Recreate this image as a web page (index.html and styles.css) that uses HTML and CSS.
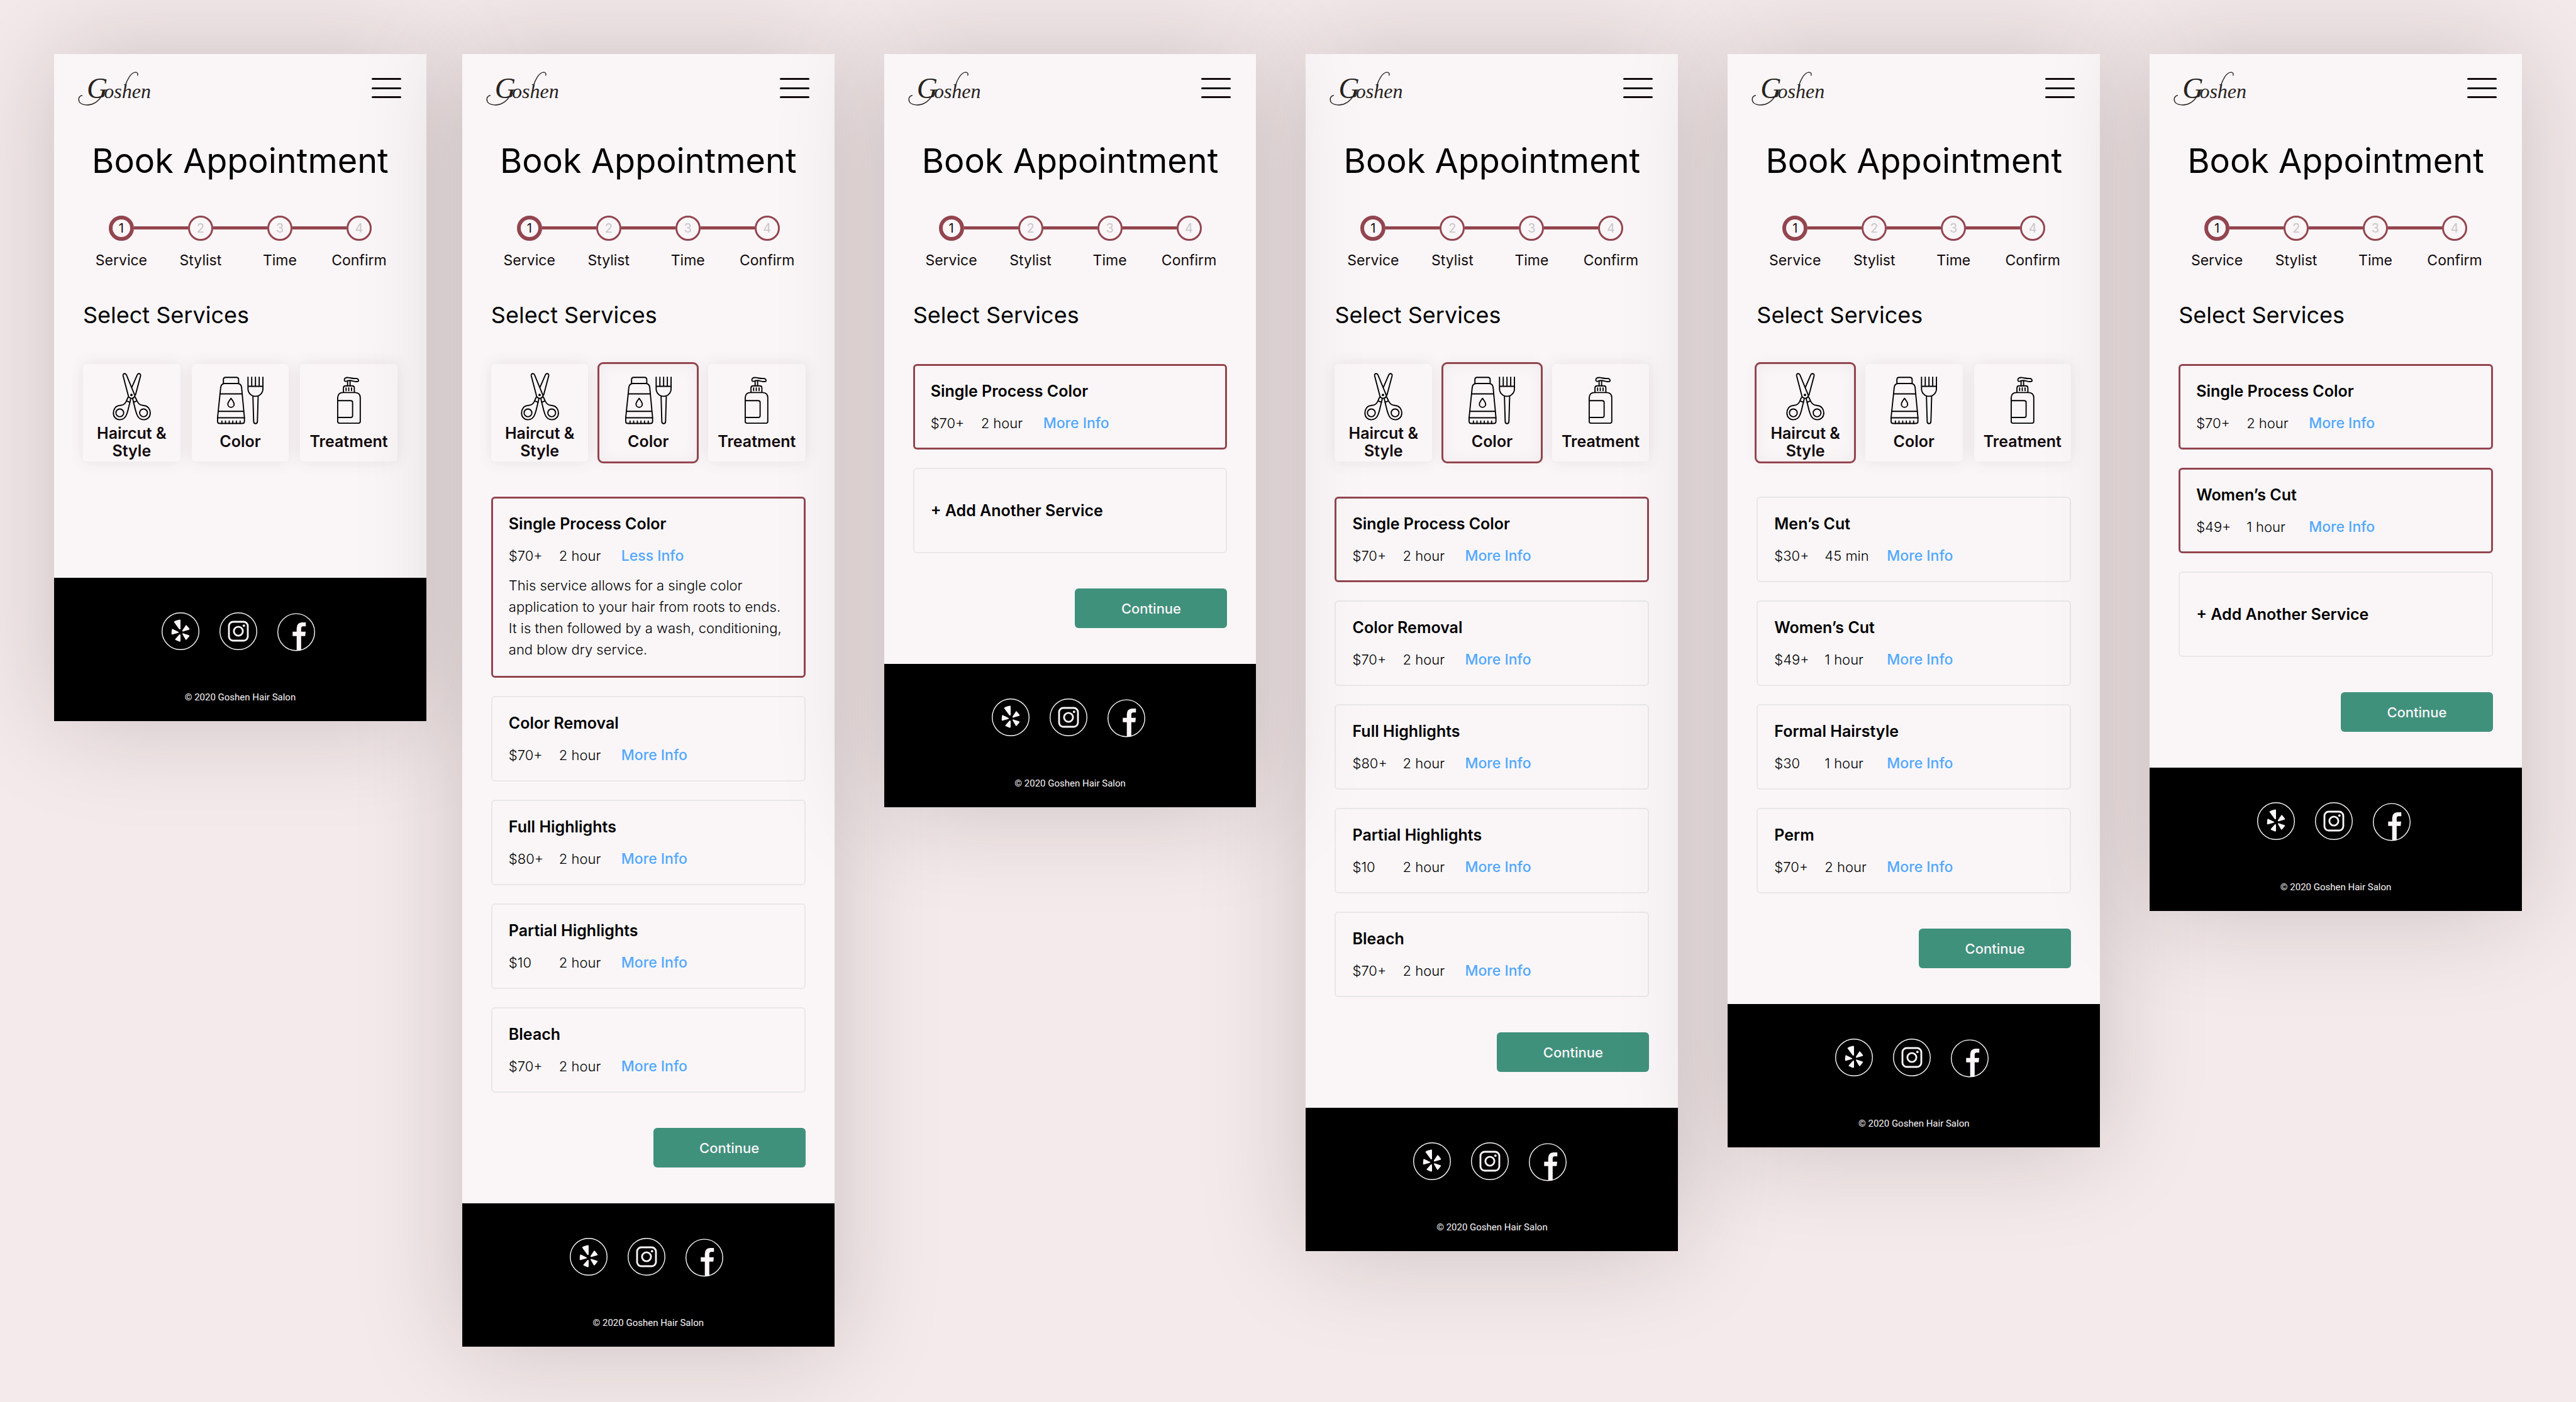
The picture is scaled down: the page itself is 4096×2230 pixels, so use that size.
FILE: index.html
```html
<!DOCTYPE html>
<html lang="en">
<head>
<meta charset="utf-8">
<meta name="viewport" content="width=device-width, initial-scale=1">
<title>Goshen Hair Salon – Book Appointment</title>
<link rel="stylesheet" href="styles.css">
</head>
<body>
<svg class="sprite" aria-hidden="true">
  <symbol id="swash" viewBox="70 55 480 240">
    <path fill="none" stroke="currentColor" stroke-width="6" stroke-linecap="round" d="M238 196C222 252 176 284 124 282C96 281 76 268 75 246C75 232 84 221 97 218"/>
    <path fill="none" stroke="currentColor" stroke-width="6" stroke-linecap="round" d="M386 156C398 112 424 66 454 63C468 63 473 72 469 84"/>
  </symbol>
  <symbol id="scissors" viewBox="148 86 256 320">
    <g fill="none" stroke="currentColor" stroke-width="8" stroke-linejoin="round">
      <path d="M276 184L313 99Q317 91 325 91Q337 92 335 106L300 238"/>
      <path d="M253 240L218 106Q216 92 228 91Q237 91 240 99L297 238Q291 257 275 257Q258 256 253 240Z"/>
      <path d="M253 246L240 274L264 283L269 258M298 246L311 274L288 283L282 258"/>
      <path d="M240 276C228 300 215 303 195 305C168 307 153 330 153 355C153 382 172 400 196 400C222 400 236 382 243 362C254 330 256 310 264 283"/>
      <path d="M312 276C324 300 337 303 357 305C384 307 400 330 400 355C400 382 380 400 356 400C330 400 316 382 309 362C298 330 295 310 288 283"/>
      <circle cx="196" cy="354" r="26"/><circle cx="355" cy="354" r="26"/>
    </g>
    <circle cx="274" cy="234" r="8" fill="currentColor"/>
  </symbol>
  <symbol id="dye" viewBox="96 110 312 320">
    <g fill="none" stroke="currentColor" stroke-width="8" stroke-linejoin="round" stroke-linecap="round">
      <path d="M139 156V130Q139 115 154 115H226Q241 115 241 130V156"/>
      <path d="M146 156H236Q258 158 261 182L280 385V410Q280 424 266 424H114Q100 424 100 410V385L121 182Q124 158 146 156Z"/>
      <path d="M118 226H264M107 343H274M101 386H280"/>
      <path d="M129 408V424M153 408V424M178 408V424M202 408V424M226 408V424M251 408V424"/>
      <path d="M190 255C182 268 169 280 169 295A21 21 0 0 0 211 295C211 280 198 268 190 255Z"/>
      <path d="M304 114V192A50 50 0 0 0 404 192V114M304 175H404M329 114V175M354 114V175M379 114V175"/>
      <path d="M337 243L342 412Q343 425 354 425Q366 425 367 412L372 243"/>
    </g>
  </symbol>
  <symbol id="bottle" viewBox="178 110 162 320">
    <g fill="none" stroke="currentColor" stroke-width="8" stroke-linejoin="round" stroke-linecap="round">
      <path d="M227 131C226 118 240 113 256 115C275 118 285 122 308 121C320 121 324 130 323 138C318 144 300 142 285 138C268 133 255 133 243 139C235 143 227 138 227 131Z"/>
      <path d="M249 138V170M266 138V170M239 185V203M257 185V203M276 185V203"/>
      <path d="M221 214V186Q221 171 236 171H281Q295 171 295 186V214"/>
      <path d="M182 412V250Q184 216 218 216H300Q335 218 335 250V412Q335 424 323 424H195Q182 424 182 412Z"/>
      <path d="M182 271H270Q283 271 283 283V373Q283 385 270 385H182"/>
    </g>
  </symbol>
  <symbol id="yelp" viewBox="180 126 252 252">
    <circle cx="306" cy="252" r="123" fill="none" stroke="currentColor" stroke-width="6"/>
    <path fill="currentColor" d="M262 190Q262 183 300 174Q306 173 306 180V235Q304 242 298 239ZM343 210Q346 210 366 236Q367 241 362 243L322 254Q316 252 319 246ZM250 237Q247 240 246 270Q247 275 252 274L292 263Q297 260 292 256L254 237ZM302 273Q306 273 306 278V318Q304 322 298 321L271 310Q269 306 272 303L298 274ZM322 266L364 279Q367 282 364 287L347 308Q342 311 339 307L319 272Q318 267 322 266Z"/>
  </symbol>
  <symbol id="instagram" viewBox="564 126 252 252">
    <g fill="none" stroke="currentColor">
      <circle cx="690" cy="252" r="123" stroke-width="6"/>
      <rect x="627" y="189" width="126" height="126" rx="28" stroke-width="12"/>
      <circle cx="690" cy="252" r="30" stroke-width="12"/>
    </g>
    <circle cx="727" cy="215" r="8" fill="currentColor"/>
  </symbol>
  <symbol id="facebook" viewBox="948 126 252 252" overflow="visible">
    <circle cx="1074" cy="258" r="123" fill="none" stroke="currentColor" stroke-width="6"/>
    <path fill="currentColor" d="M1077 382V285H1050V255H1077V232Q1078 194 1112 193H1138V219H1120Q1107 220 1107 234V255H1137L1134 285H1107V379Z"/>
  </symbol>
</svg>

<main class="board">

  <section class="phone">
    <header class="topbar">
      <a class="logo" href="#"><span class="logo-initial">G</span>oshen<svg class="logo-swash" aria-hidden="true"><use href="#swash"/></svg></a>
      <button class="menu" type="button" aria-label="Menu"><span></span><span></span><span></span></button>
    </header>
    <h1 class="title">Book Appointment</h1>
    <ol class="steps">
      <li class="step step-current"><span class="dot">1</span>Service</li>
      <li class="step"><span class="dot">2</span>Stylist</li>
      <li class="step"><span class="dot">3</span>Time</li>
      <li class="step"><span class="dot">4</span>Confirm</li>
    </ol>
    <div class="content">
      <h2 class="subtitle">Select Services</h2>
      <div class="categories categories-only">
        <button class="category category-tall" type="button"><svg class="icon-scissors"><use href="#scissors"/></svg>Haircut &amp; Style</button>
        <button class="category" type="button"><svg class="icon-dye"><use href="#dye"/></svg>Color</button>
        <button class="category" type="button"><svg class="icon-bottle"><use href="#bottle"/></svg>Treatment</button>
      </div>
    </div>
    <footer class="footer">
      <nav class="social">
        <a href="#" aria-label="Yelp"><svg><use href="#yelp"/></svg></a>
        <a href="#" aria-label="Instagram"><svg><use href="#instagram"/></svg></a>
        <a href="#" aria-label="Facebook"><svg><use href="#facebook"/></svg></a>
      </nav>
      <p class="copyright">© 2020 Goshen Hair Salon</p>
    </footer>
  </section>

  <section class="phone">
    <header class="topbar">
      <a class="logo" href="#"><span class="logo-initial">G</span>oshen<svg class="logo-swash" aria-hidden="true"><use href="#swash"/></svg></a>
      <button class="menu" type="button" aria-label="Menu"><span></span><span></span><span></span></button>
    </header>
    <h1 class="title">Book Appointment</h1>
    <ol class="steps">
      <li class="step step-current"><span class="dot">1</span>Service</li>
      <li class="step"><span class="dot">2</span>Stylist</li>
      <li class="step"><span class="dot">3</span>Time</li>
      <li class="step"><span class="dot">4</span>Confirm</li>
    </ol>
    <div class="content">
      <h2 class="subtitle">Select Services</h2>
      <div class="categories">
        <button class="category category-tall" type="button"><svg class="icon-scissors"><use href="#scissors"/></svg>Haircut &amp; Style</button>
        <button class="category selected" type="button"><svg class="icon-dye"><use href="#dye"/></svg>Color</button>
        <button class="category" type="button"><svg class="icon-bottle"><use href="#bottle"/></svg>Treatment</button>
      </div>
      <ul class="services">
        <li class="service chosen">
          <h3>Single Process Color</h3>
          <p class="meta"><span>$70+</span><span>2 hour</span><button type="button">Less Info</button></p>
          <p class="details">This service allows for a single color<br>application to your hair from roots to ends.<br>It is then followed by a wash, conditioning,<br>and blow dry service.</p>
        </li>
        <li class="service"><h3>Color Removal</h3><p class="meta"><span>$70+</span><span>2 hour</span><button type="button">More Info</button></p></li>
        <li class="service"><h3>Full Highlights</h3><p class="meta"><span>$80+</span><span>2 hour</span><button type="button">More Info</button></p></li>
        <li class="service"><h3>Partial Highlights</h3><p class="meta"><span>$10</span><span>2 hour</span><button type="button">More Info</button></p></li>
        <li class="service"><h3>Bleach</h3><p class="meta"><span>$70+</span><span>2 hour</span><button type="button">More Info</button></p></li>
      </ul>
      <button class="continue" type="button">Continue</button>
    </div>
    <footer class="footer">
      <nav class="social">
        <a href="#" aria-label="Yelp"><svg><use href="#yelp"/></svg></a>
        <a href="#" aria-label="Instagram"><svg><use href="#instagram"/></svg></a>
        <a href="#" aria-label="Facebook"><svg><use href="#facebook"/></svg></a>
      </nav>
      <p class="copyright">© 2020 Goshen Hair Salon</p>
    </footer>
  </section>

  <section class="phone phone-front">
    <header class="topbar">
      <a class="logo" href="#"><span class="logo-initial">G</span>oshen<svg class="logo-swash" aria-hidden="true"><use href="#swash"/></svg></a>
      <button class="menu" type="button" aria-label="Menu"><span></span><span></span><span></span></button>
    </header>
    <h1 class="title">Book Appointment</h1>
    <ol class="steps">
      <li class="step step-current"><span class="dot">1</span>Service</li>
      <li class="step"><span class="dot">2</span>Stylist</li>
      <li class="step"><span class="dot">3</span>Time</li>
      <li class="step"><span class="dot">4</span>Confirm</li>
    </ol>
    <div class="content">
      <h2 class="subtitle">Select Services</h2>
      <ul class="services">
        <li class="service chosen"><h3>Single Process Color</h3><p class="meta"><span>$70+</span><span>2 hour</span><button type="button">More Info</button></p></li>
        <li><button class="add-service" type="button">+ Add Another Service</button></li>
      </ul>
      <button class="continue" type="button">Continue</button>
    </div>
    <footer class="footer">
      <nav class="social">
        <a href="#" aria-label="Yelp"><svg><use href="#yelp"/></svg></a>
        <a href="#" aria-label="Instagram"><svg><use href="#instagram"/></svg></a>
        <a href="#" aria-label="Facebook"><svg><use href="#facebook"/></svg></a>
      </nav>
      <p class="copyright">© 2020 Goshen Hair Salon</p>
    </footer>
  </section>

  <section class="phone">
    <header class="topbar">
      <a class="logo" href="#"><span class="logo-initial">G</span>oshen<svg class="logo-swash" aria-hidden="true"><use href="#swash"/></svg></a>
      <button class="menu" type="button" aria-label="Menu"><span></span><span></span><span></span></button>
    </header>
    <h1 class="title">Book Appointment</h1>
    <ol class="steps">
      <li class="step step-current"><span class="dot">1</span>Service</li>
      <li class="step"><span class="dot">2</span>Stylist</li>
      <li class="step"><span class="dot">3</span>Time</li>
      <li class="step"><span class="dot">4</span>Confirm</li>
    </ol>
    <div class="content">
      <h2 class="subtitle">Select Services</h2>
      <div class="categories">
        <button class="category category-tall" type="button"><svg class="icon-scissors"><use href="#scissors"/></svg>Haircut &amp; Style</button>
        <button class="category selected" type="button"><svg class="icon-dye"><use href="#dye"/></svg>Color</button>
        <button class="category" type="button"><svg class="icon-bottle"><use href="#bottle"/></svg>Treatment</button>
      </div>
      <ul class="services">
        <li class="service chosen"><h3>Single Process Color</h3><p class="meta"><span>$70+</span><span>2 hour</span><button type="button">More Info</button></p></li>
        <li class="service"><h3>Color Removal</h3><p class="meta"><span>$70+</span><span>2 hour</span><button type="button">More Info</button></p></li>
        <li class="service"><h3>Full Highlights</h3><p class="meta"><span>$80+</span><span>2 hour</span><button type="button">More Info</button></p></li>
        <li class="service"><h3>Partial Highlights</h3><p class="meta"><span>$10</span><span>2 hour</span><button type="button">More Info</button></p></li>
        <li class="service"><h3>Bleach</h3><p class="meta"><span>$70+</span><span>2 hour</span><button type="button">More Info</button></p></li>
      </ul>
      <button class="continue" type="button">Continue</button>
    </div>
    <footer class="footer">
      <nav class="social">
        <a href="#" aria-label="Yelp"><svg><use href="#yelp"/></svg></a>
        <a href="#" aria-label="Instagram"><svg><use href="#instagram"/></svg></a>
        <a href="#" aria-label="Facebook"><svg><use href="#facebook"/></svg></a>
      </nav>
      <p class="copyright">© 2020 Goshen Hair Salon</p>
    </footer>
  </section>

  <section class="phone">
    <header class="topbar">
      <a class="logo" href="#"><span class="logo-initial">G</span>oshen<svg class="logo-swash" aria-hidden="true"><use href="#swash"/></svg></a>
      <button class="menu" type="button" aria-label="Menu"><span></span><span></span><span></span></button>
    </header>
    <h1 class="title">Book Appointment</h1>
    <ol class="steps">
      <li class="step step-current"><span class="dot">1</span>Service</li>
      <li class="step"><span class="dot">2</span>Stylist</li>
      <li class="step"><span class="dot">3</span>Time</li>
      <li class="step"><span class="dot">4</span>Confirm</li>
    </ol>
    <div class="content">
      <h2 class="subtitle">Select Services</h2>
      <div class="categories">
        <button class="category category-tall selected" type="button"><svg class="icon-scissors"><use href="#scissors"/></svg>Haircut &amp; Style</button>
        <button class="category" type="button"><svg class="icon-dye"><use href="#dye"/></svg>Color</button>
        <button class="category" type="button"><svg class="icon-bottle"><use href="#bottle"/></svg>Treatment</button>
      </div>
      <ul class="services">
        <li class="service"><h3>Men’s Cut</h3><p class="meta"><span>$30+</span><span>45 min</span><button type="button">More Info</button></p></li>
        <li class="service"><h3>Women’s Cut</h3><p class="meta"><span>$49+</span><span>1 hour</span><button type="button">More Info</button></p></li>
        <li class="service"><h3>Formal Hairstyle</h3><p class="meta"><span>$30</span><span>1 hour</span><button type="button">More Info</button></p></li>
        <li class="service"><h3>Perm</h3><p class="meta"><span>$70+</span><span>2 hour</span><button type="button">More Info</button></p></li>
      </ul>
      <button class="continue" type="button">Continue</button>
    </div>
    <footer class="footer">
      <nav class="social">
        <a href="#" aria-label="Yelp"><svg><use href="#yelp"/></svg></a>
        <a href="#" aria-label="Instagram"><svg><use href="#instagram"/></svg></a>
        <a href="#" aria-label="Facebook"><svg><use href="#facebook"/></svg></a>
      </nav>
      <p class="copyright">© 2020 Goshen Hair Salon</p>
    </footer>
  </section>

  <section class="phone">
    <header class="topbar">
      <a class="logo" href="#"><span class="logo-initial">G</span>oshen<svg class="logo-swash" aria-hidden="true"><use href="#swash"/></svg></a>
      <button class="menu" type="button" aria-label="Menu"><span></span><span></span><span></span></button>
    </header>
    <h1 class="title">Book Appointment</h1>
    <ol class="steps">
      <li class="step step-current"><span class="dot">1</span>Service</li>
      <li class="step"><span class="dot">2</span>Stylist</li>
      <li class="step"><span class="dot">3</span>Time</li>
      <li class="step"><span class="dot">4</span>Confirm</li>
    </ol>
    <div class="content">
      <h2 class="subtitle">Select Services</h2>
      <ul class="services">
        <li class="service chosen"><h3>Single Process Color</h3><p class="meta"><span>$70+</span><span>2 hour</span><button type="button">More Info</button></p></li>
        <li class="service chosen"><h3>Women’s Cut</h3><p class="meta"><span>$49+</span><span>1 hour</span><button type="button">More Info</button></p></li>
        <li><button class="add-service" type="button">+ Add Another Service</button></li>
      </ul>
      <button class="continue" type="button">Continue</button>
    </div>
    <footer class="footer">
      <nav class="social">
        <a href="#" aria-label="Yelp"><svg><use href="#yelp"/></svg></a>
        <a href="#" aria-label="Instagram"><svg><use href="#instagram"/></svg></a>
        <a href="#" aria-label="Facebook"><svg><use href="#facebook"/></svg></a>
      </nav>
      <p class="copyright">© 2020 Goshen Hair Salon</p>
    </footer>
  </section>

</main>
</body>
</html>
```
FILE: styles.css
```css
:root {
  --paper: #faf6f8;
  --wine: #93454f;
  --line: #e9e7e8;
  --green: #40917c;
  --blue: #51a8ff;
}

* { box-sizing: border-box; }

body {
  margin: 0;
  min-height: 100vh;
  background: #f5eaeb;
  color: #000;
  font: 400 22px/28px Inter, "Liberation Sans", sans-serif;
}

h1, h2, h3, p, ol, ul { margin: 0; padding: 0; }
ol, ul { list-style: none; }

button {
  padding: 0;
  border: 0;
  background: none;
  color: inherit;
  font: inherit;
  cursor: pointer;
}

.sprite { display: none; }

.board {
  display: flex;
  align-items: flex-start;
  gap: 79px;
  padding: 86px;
}

.phone {
  position: relative;
  flex: 1 1 0;
  min-width: 0;
  background: var(--paper);
  box-shadow: 0 0 160px rgba(20, 8, 4, 0.18);
}
.phone:first-child { margin-right: -22px; }
.phone-front { z-index: 1; }

/* Top bar */
.topbar {
  display: flex;
  justify-content: space-between;
  align-items: flex-start;
  height: 138px;
  padding: 23px 40px 0 38px;
}

.logo {
  position: relative;
  padding-left: 14px;
  color: #28231d;
  font: italic 32px/64px "Liberation Serif", serif;
  text-decoration: none;
}
.logo-initial { margin-right: -6px; font-size: 46px; }
.logo-swash {
  position: absolute;
  left: 0;
  top: 4px;
  width: 114px;
  height: 57px;
}

.menu {
  display: flex;
  flex-direction: column;
  justify-content: space-between;
  width: 47px;
  height: 32px;
  margin-top: 15px;
}
.menu span { height: 3px; border-radius: 2px; background: #120a0c; }

.title {
  font-size: 54px;
  font-weight: 400;
  line-height: 64px;
  text-align: center;
}

/* Progress */
.steps {
  display: flex;
  justify-content: center;
  padding-top: 55px;
}
.step {
  position: relative;
  display: flex;
  flex-direction: column;
  align-items: center;
  gap: 17px;
  width: 126px;
  color: #120a0c;
  font-size: 23px;
}
.step + .step::before {
  content: "";
  position: absolute;
  top: 17px;
  right: 83px;
  width: 86px;
  height: 5px;
  background: var(--wine);
}
.dot {
  width: 40px;
  height: 40px;
  border: 3px solid var(--wine);
  border-radius: 50%;
  color: #c9c6c8;
  font-size: 20px;
  line-height: 34px;
  text-align: center;
}
.step-current .dot { border-width: 6px; color: #120a0c; line-height: 28px; }

/* Service choice */
.content {
  display: flex;
  flex-direction: column;
  gap: 56px;
  padding: 51px 46px 57px;
}
.subtitle { font-size: 36px; font-weight: 400; line-height: 44px; }

.categories {
  display: grid;
  grid-template-columns: repeat(3, 1fr);
  gap: 18px;
}
.categories-only { margin-bottom: 128px; }

.category {
  display: flex;
  flex-direction: column;
  align-items: center;
  gap: 13px;
  height: 155px;
  padding: 20px 12px 0;
  border-radius: 6px;
  background: var(--paper);
  box-shadow: 0 0 24px rgba(70, 30, 10, 0.1);
  color: #120a0c;
  font-size: 25px;
  font-weight: 600;
}
.category-tall { gap: 6px; padding-top: 14px; }
.category svg { flex: none; height: 76px; color: #000; }
.icon-scissors { width: 61px; }
.icon-dye { width: 74px; }
.icon-bottle { width: 38px; }

.selected {
  outline: 3px solid var(--wine);
  box-shadow: 0 0 24px rgba(70, 30, 10, 0.06), inset 0 0 24px rgba(70, 30, 10, 0.06);
}

.services { display: grid; gap: 29px; }

.service {
  padding: 27px 26px 26px;
  border: 2px solid var(--line);
  border-radius: 6px;
}
.chosen { padding: 26px 25px 25px; border: 3px solid var(--wine); }
.service h3 { font-size: 25px; font-weight: 600; line-height: 28px; }

.meta {
  display: grid;
  grid-template-columns: 80px 99px 1fr;
  padding-top: 23px;
  font-weight: 300;
  white-space: nowrap;
}
.meta button { justify-self: start; color: var(--blue); font-size: 23px; font-weight: 500; }

.details {
  padding-top: 16px;
  font-size: 22px;
  font-weight: 300;
  line-height: 34px;
  white-space: nowrap;
}

.add-service {
  width: 100%;
  height: 136px;
  padding: 0 26px;
  border: 2px solid var(--line);
  border-radius: 6px;
  font-size: 25px;
  font-weight: 600;
  text-align: left;
}

.continue {
  align-self: flex-end;
  width: 242px;
  height: 63px;
  border-radius: 6px;
  background: var(--green);
  color: var(--paper);
  font-weight: 500;
}

/* Footer */
.footer {
  padding: 55px 0 28px;
  background: #000;
  color: var(--paper);
  text-align: center;
}
.social {
  display: flex;
  justify-content: center;
  gap: 32px;
  padding-right: 6px;
}
.social a { width: 60px; height: 60px; color: inherit; }
.social svg { display: block; width: 60px; height: 60px; overflow: visible; }
.copyright {
  padding-top: 65px;
  font: 400 15px/20px Roboto, sans-serif;
}
```
